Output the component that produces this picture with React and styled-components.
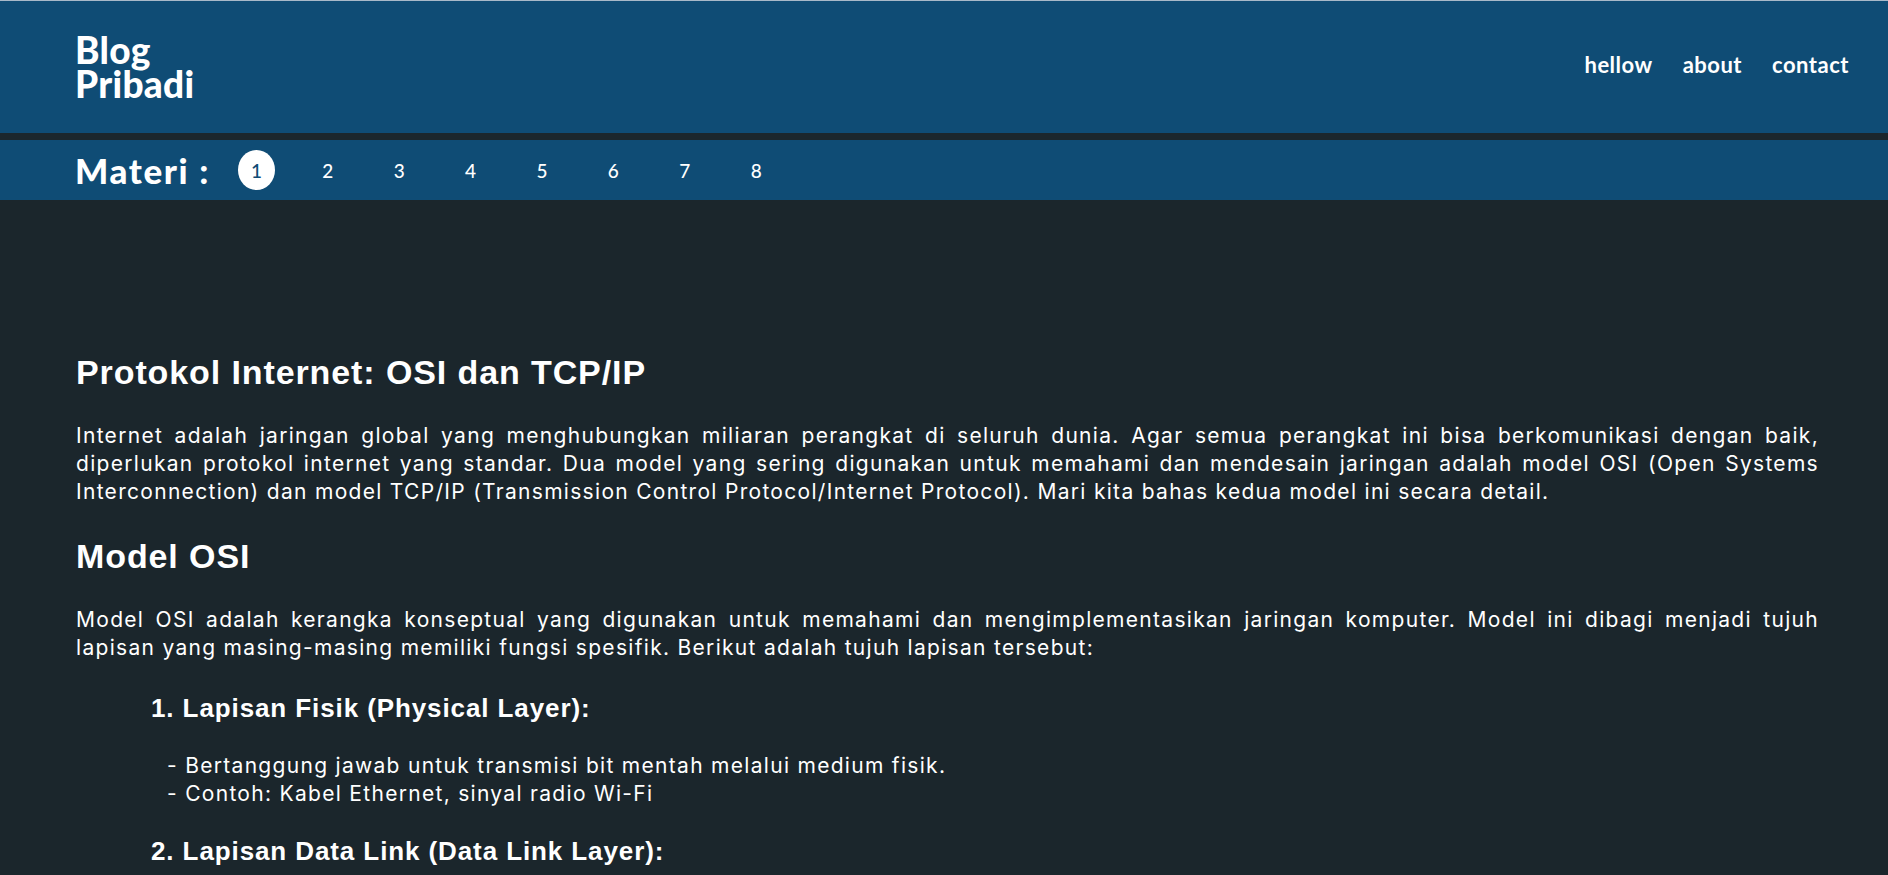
import React from "react";
import styled, { createGlobalStyle } from "styled-components";

const GlobalStyle = createGlobalStyle`
  * {
    box-sizing: border-box;
  }
  body {
    margin: 0;
    background: #1b262c;
    color: #ffffff;
    font-family: "Inter", "Liberation Sans", sans-serif;
  }
`;

const Header = styled.header`
  height: 133px;
  background: #0f4c75;
  border-top: 1px solid #a9b9c9;
  display: flex;
  justify-content: space-between;
  align-items: center;
  padding: 0 39px 0 75px;
`;

const Brand = styled.h1`
  margin: 0;
  font-family: "Lato", "Liberation Sans", sans-serif;
  font-weight: 900;
  font-size: 37px;
  line-height: 34px;
  letter-spacing: 0.3px;
  color: #ffffff;
`;

const Nav = styled.nav`
  display: flex;
  gap: 30px;
  a {
    color: #ffffff;
    text-decoration: none;
    font-family: "Lato", "Liberation Sans", sans-serif;
    font-weight: 700;
    font-size: 22px;
    letter-spacing: 0.5px;
    margin-bottom: 6px;
  }
`;

const MateriBar = styled.div`
  margin-top: 7px;
  height: 60px;
  background: #0f4c75;
  display: flex;
  align-items: center;
  padding-left: 75px;
`;

const MateriLabel = styled.span`
  font-family: "Lato", "Liberation Sans", sans-serif;
  font-weight: 900;
  font-size: 35px;
  letter-spacing: 1.6px;
  margin-right: 28px;
`;

const Pages = styled.div`
  display: flex;
  gap: 34.4px;
`;

const PageLink = styled.a`
  width: 37px;
  height: 40px;
  display: flex;
  align-items: center;
  justify-content: center;
  border-radius: 50%;
  font-family: "Lato", "Liberation Sans", sans-serif;
  font-size: 19px;
  font-weight: 500;
  text-decoration: none;
  color: ${(p) => (p.$active ? "#0f4c75" : "#ffffff")};
  background: ${(p) => (p.$active ? "#ffffff" : "transparent")};
`;

const Content = styled.main`
  padding: 153px 69px 40px 76px;
`;

const Title = styled.h2`
  margin: 0;
  font-family: "Liberation Sans", Arial, sans-serif;
  font-weight: 700;
  font-size: 34px;
  line-height: 38px;
  letter-spacing: 0.9px;
`;

const SubTitle = styled.h3`
  margin: 26px 0 0 75px;
  font-family: "Liberation Sans", Arial, sans-serif;
  font-weight: 700;
  font-size: 26px;
  line-height: 30px;
  letter-spacing: 0.9px;
`;

const Paragraph = styled.p`
  margin: 31px 0 31px;
  font-size: 21px;
  line-height: 28px;
  letter-spacing: 1.3px;
  text-align: justify;
`;

const Points = styled.ul`
  list-style: none;
  margin: 29px 0 28px 91px;
  padding: 0;
  li {
    font-size: 21px;
    line-height: 28px;
    letter-spacing: 1.3px;
  }
`;

const layers = [
  {
    title: "1. Lapisan Fisik (Physical Layer):",
    points: [
      "- Bertanggung jawab untuk transmisi bit mentah melalui medium fisik.",
      "- Contoh: Kabel Ethernet, sinyal radio Wi-Fi",
    ],
  },
  {
    title: "2. Lapisan Data Link (Data Link Layer):",
    points: [
      "- Menyediakan transfer data yang bebas kesalahan antara dua node yang terhubung langsung.",
      "- Contoh: Ethernet, PPP",
    ],
  },
];

export default function App() {
  return (
    <>
      <GlobalStyle />
      <Header>
        <Brand>
          Blog
          <br />
          Pribadi
        </Brand>
        <Nav>
          <a href="#">hellow</a>
          <a href="#">about</a>
          <a href="#">contact</a>
        </Nav>
      </Header>
      <MateriBar>
        <MateriLabel>Materi :</MateriLabel>
        <Pages>
          {[1, 2, 3, 4, 5, 6, 7, 8].map((n) => (
            <PageLink key={n} href="#" $active={n === 1}>
              {n}
            </PageLink>
          ))}
        </Pages>
      </MateriBar>
      <Content>
        <Title>Protokol Internet: OSI dan TCP/IP</Title>
        <Paragraph>
          Internet adalah jaringan global yang menghubungkan miliaran perangkat
          di seluruh dunia. Agar semua perangkat ini bisa berkomunikasi dengan
          baik, diperlukan protokol internet yang standar. Dua model yang sering
          digunakan untuk memahami dan mendesain jaringan adalah model OSI (Open
          Systems Interconnection) dan model TCP/IP (Transmission Control
          Protocol/Internet Protocol). Mari kita bahas kedua model ini secara
          detail.
        </Paragraph>
        <Title>Model OSI</Title>
        <Paragraph>
          Model OSI adalah kerangka konseptual yang digunakan untuk memahami dan
          mengimplementasikan jaringan komputer. Model ini dibagi menjadi tujuh
          lapisan yang masing-masing memiliki fungsi spesifik. Berikut adalah
          tujuh lapisan tersebut:
        </Paragraph>
        {layers.map((layer) => (
          <section key={layer.title}>
            <SubTitle>{layer.title}</SubTitle>
            <Points>
              {layer.points.map((p) => (
                <li key={p}>{p}</li>
              ))}
            </Points>
          </section>
        ))}
      </Content>
    </>
  );
}
